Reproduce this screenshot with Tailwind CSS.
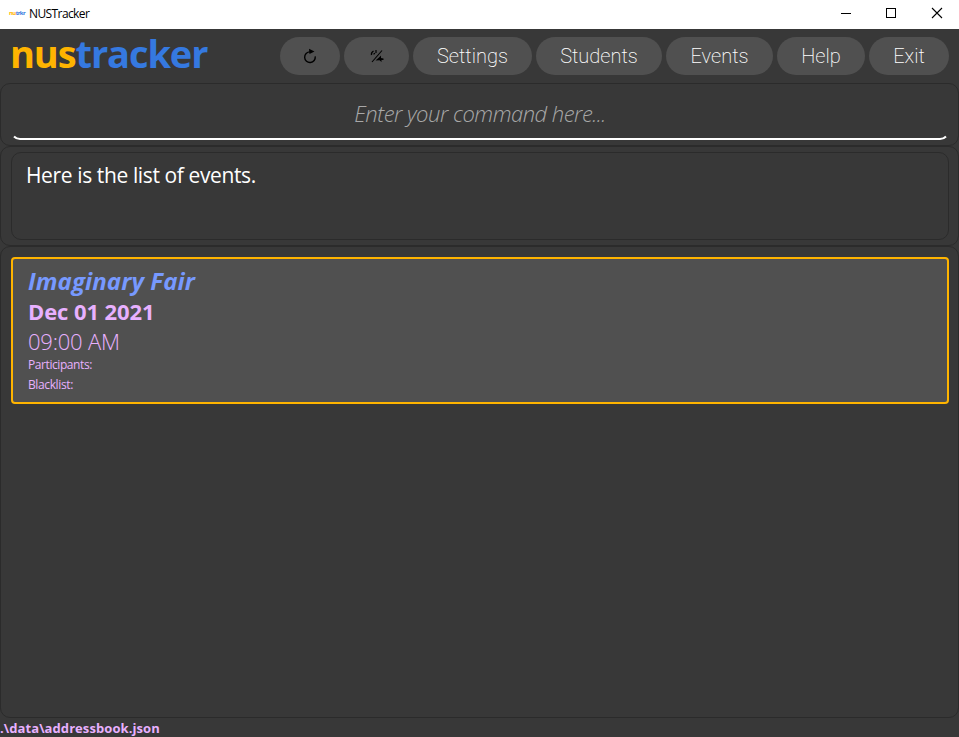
<!DOCTYPE html>
<html lang="en">
<head>
<meta charset="utf-8">
<title>NUSTracker</title>
<script src="https://cdn.jsdelivr.net/npm/@tailwindcss/browser@4"></script>
</head>
<body class="w-[959px] h-[737px] overflow-hidden flex flex-col bg-[#383838] font-['Open_Sans','Noto_Sans',sans-serif] whitespace-nowrap">
  <header class="h-[29px] shrink-0 bg-white flex items-center pl-[9px] text-black">
    <div class="w-[14px] text-[6px] leading-[8px] font-bold tracking-[-0.6px] -mt-[3px]"><span class="text-[#ffb400]">nu</span><span class="text-[#3579e0]">trkr</span></div>
    <div class="ml-[6px] -mt-[2px] text-[12px] leading-[16px] tracking-[-0.6px]">NUSTracker</div>
    <svg class="ml-auto mr-[16px] -mt-[3px]" width="102" height="12" viewBox="0 0 102 12" fill="none" stroke="#000">
      <path d="M0 6.500h10M45.500 1.500h9v9h-9z" shape-rendering="crispEdges"/>
      <path d="M91 1l10 10M101 1l-10 10" stroke-width="1.100"/>
    </svg>
  </header>
  <nav class="h-[54px] shrink-0 flex items-start pl-[10px] pr-[10px] pt-2">
    <h1 class="text-[38px] leading-[38px] font-bold tracking-[-1.1px] -mt-[3px]"><span class="text-[#ffb400]">nus</span><span class="text-[#3579e0]">tracker</span></h1>
    <div class="ml-auto flex gap-1 font-['Roboto',sans-serif] font-extralight text-[20px] text-white">
      <button class="w-[60px] h-[38px] rounded-full bg-[#505050] flex items-center justify-center">
        <svg width="14" height="16" viewBox="0 0 14 16" fill="none" stroke="#000" stroke-width="1.400"><path d="M7 3.900A5.300 5.300 0 1 0 12.200 8.400"/><path d="M6 0.800L11.500 3.600L6.500 6z" fill="#000" stroke="none"/></svg>
      </button>
      <button class="w-[65px] h-[38px] rounded-full bg-[#505050] flex items-center justify-center">
        <svg width="14" height="14" viewBox="0 0 14 14" fill="none" stroke="#000"><path d="M2 13L12 1.500" stroke-width="1.100"/><path d="M3.500 2Q1 3.500 1.500 6" stroke-width="1.300"/><path d="M6 1v3M3.500 5.200l1.500-1" stroke-width="1.200"/><path d="M5.500 11.500L9 8.500L11 6.500V9L13.500 9.500V11H11.500V13L9.500 11.300z" fill="#000" stroke="none"/></svg>
      </button>
      <button class="w-[119px] h-[38px] rounded-full bg-[#505050]">Settings</button>
      <button class="w-[126px] h-[38px] rounded-full bg-[#505050]">Students</button>
      <button class="w-[107px] h-[38px] rounded-full bg-[#505050]">Events</button>
      <button class="w-[88px] h-[38px] rounded-full bg-[#505050]">Help</button>
      <button class="w-[80px] h-[38px] rounded-full bg-[#505050]">Exit</button>
    </div>
  </nav>
  <section class="h-[63px] shrink-0 border border-[#2b2b2b] rounded-[10px] pl-[10px] pr-[9px] pt-[5px]">
    <div class="relative h-[51px] text-center text-[22px] leading-[49px] italic font-light text-[#a8a8a8] tracking-[-0.5px]">Enter your command here...
      <svg class="absolute left-0 bottom-0 w-full h-[5px]" viewBox="0 0 938 5" preserveAspectRatio="none" fill="none" stroke="#fff" stroke-width="2"><path d="M3 1.500Q5.500 4 9 4H929Q932.500 4 935 1.500"/></svg>
    </div>
  </section>
  <section class="h-[100px] shrink-0 border border-[#2b2b2b] rounded-[10px] pl-[10px] pr-[9px] pt-[5px]">
    <div class="h-[88px] border border-[#2b2b2b] rounded-[10px] pl-[14px] pt-[7px] text-[21px] leading-[30px] tracking-[-0.38px] text-white">Here is the list of events.</div>
  </section>
  <main class="h-[472px] shrink-0 border border-[#2b2b2b] rounded-[10px] pl-[10px] pr-[9px] pt-[10px]">
    <article class="h-[147px] bg-[#505050] border-2 border-[#ffb400] rounded-[4px] pl-[15px] pt-[7px] text-[#e8b0ff]">
      <h2 class="text-[24px] leading-[30px] font-bold italic tracking-[0.1px] text-[#7799ff]">Imaginary Fair</h2>
      <p class="text-[22px] leading-[30px] font-bold tracking-[-0.1px]">Dec 01 2021</p>
      <p class="text-[22px] leading-[30px] font-light tracking-[-0.2px]">09:00 AM</p>
      <p class="text-[12px] leading-[20px] -mt-px tracking-[-0.42px]">Participants:</p>
      <p class="text-[12px] leading-[20px] tracking-[-0.38px]">Blacklist:</p>
    </article>
  </main>
  <footer class="h-[19px] shrink-0 text-[13px] leading-[20px] font-bold tracking-[0.08px] text-[#e8b0ff]">.\data\addressbook.json</footer>
</body>
</html>
